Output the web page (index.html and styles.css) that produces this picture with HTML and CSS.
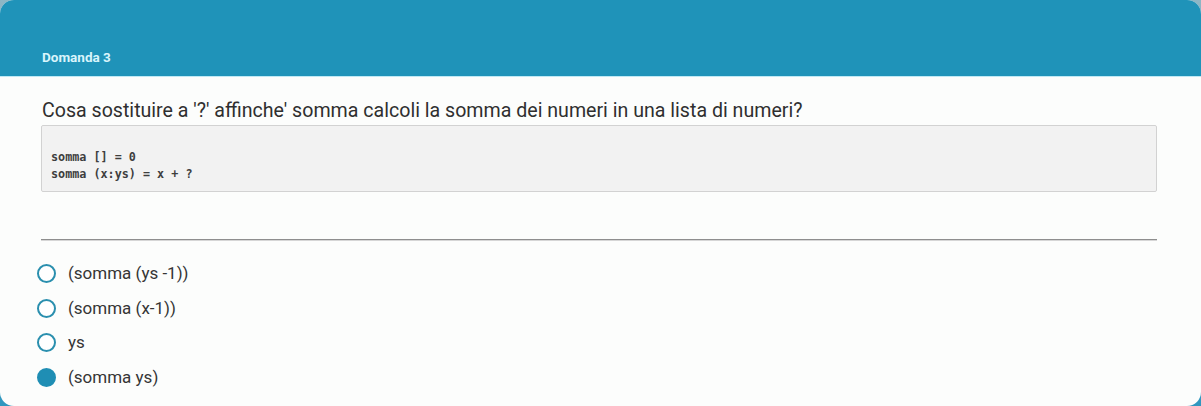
FILE: index.html
```html
<!DOCTYPE html>
<html lang="it">
<head>
<meta charset="utf-8">
<title>Domanda 3</title>
<link rel="stylesheet" href="styles.css">
</head>
<body>
<div class="card">
  <div class="card-header">
    <h3 class="card-title">Domanda 3</h3>
  </div>
  <div class="card-body">
    <p class="question">Cosa sostituire a '?' affinche' somma calcoli la somma dei numeri in una lista di numeri?</p>
    <pre class="code">

somma [] = 0
somma (x:ys) = x + ?</pre>
    <hr class="sep">
    <ul class="options">
      <li class="option"><span class="radio"></span><span class="label">(somma (ys -1))</span></li>
      <li class="option"><span class="radio"></span><span class="label">(somma (x-1))</span></li>
      <li class="option"><span class="radio"></span><span class="label">ys</span></li>
      <li class="option"><span class="radio checked"></span><span class="label">(somma ys)</span></li>
    </ul>
  </div>
</div>
</body>
</html>
```

FILE: styles.css
```css
html, body {
  margin: 0;
  padding: 0;
  height: 406px;
  overflow: hidden;
}
body {
  background: linear-gradient(to bottom, #8db6c5 0%, #6fa9c0 50%, #2f97bf 100%);
  font-family: Roboto, "Liberation Sans", Arial, sans-serif;
}
.card {
  height: 406px;
  background: #fcfdfc;
  border-radius: 14px;
  overflow: hidden;
  display: flex;
  flex-direction: column;
}
.card-header {
  background: #1f93b9;
  border-bottom: 1px solid #bfe9f5;
  display: flex;
  align-items: flex-end;
  padding: 0 42px 11px;
  box-sizing: content-box;
  height: 65px;
}
.card-title {
  margin: 0;
  font-size: 13.5px;
  font-weight: 700;
  color: #d9f5fc;
  line-height: 16px;
}
.card-body {
  padding: 0 44px 0 41px;
}
.question {
  margin: 20px 0 0 1px;
  font-size: 19.6px;
  line-height: 28px;
  color: #2f2f2f;
}
.code {
  margin: 0;
  padding: 6px 9px 8px;
  background: #f2f2f2;
  border: 1px solid #d2d2d2;
  border-radius: 2px;
  font-family: "DejaVu Sans Mono", "Liberation Mono", monospace;
  font-weight: 700;
  font-size: 11.75px;
  line-height: 17px;
  color: #3e3e3e;
}
.sep {
  margin: 47px 0 0;
  border: 0;
  border-top: 1px solid #8e8e8e;
  border-bottom: 1px solid #d6d6d6;
  height: 0;
}
.options {
  list-style: none;
  margin: 23px 0 0 -4px;
  padding: 0;
  display: flex;
  flex-direction: column;
  gap: 15.5px;
}
.option {
  display: flex;
  align-items: center;
  gap: 12px;
  height: 19px;
}
.radio {
  width: 15px;
  height: 15px;
  border: 2px solid #2a8fae;
  border-radius: 50%;
  flex: none;
  background: #fff;
}
.radio.checked {
  background: #1f8eb4;
  border-color: #1f8eb4;
}
.label {
  font-size: 17px;
  color: #353535;
  line-height: 19px;
}
```
